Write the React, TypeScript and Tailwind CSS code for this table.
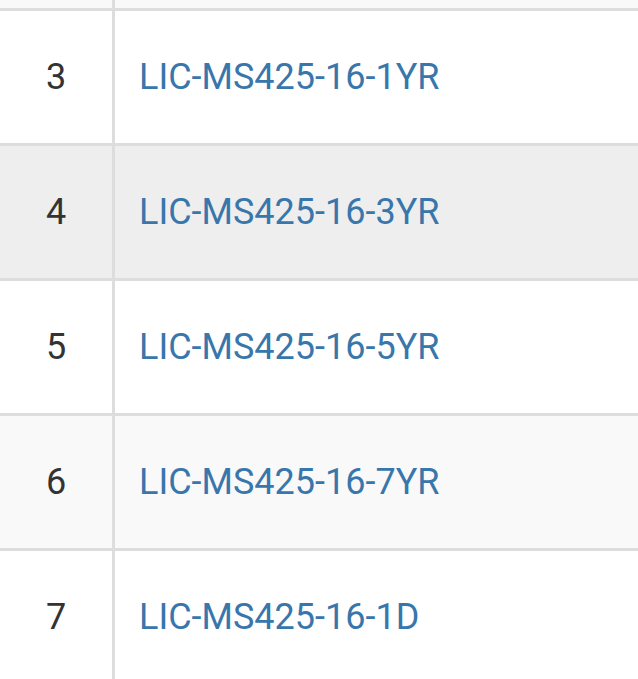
const rows = [
  { n: '3', sku: 'LIC-MS425-16-1YR', bg: 'bg-white' },
  { n: '4', sku: 'LIC-MS425-16-3YR', bg: 'bg-[#eeeeee]' },
  { n: '5', sku: 'LIC-MS425-16-5YR', bg: 'bg-white' },
  { n: '6', sku: 'LIC-MS425-16-7YR', bg: 'bg-[#f9f9f9]' },
  { n: '7', sku: 'LIC-MS425-16-1D', bg: 'bg-white' },
];

export default function App() {
  return (
    <div
      className="h-[679px] w-[638px] overflow-hidden bg-white"
      style={{ fontFamily: 'Roboto, "Liberation Sans", sans-serif' }}
    >
      {/* tail of the previous row */}
      <div className="flex h-[8px] bg-[#f9f9f9]">
        <div className="w-[115px] shrink-0 border-r-[3px] border-[#dddddd]" />
        <div className="flex-1" />
      </div>

      {rows.map((row) => (
        <div key={row.n} className={`flex h-[135px] border-t-[3px] border-[#dddddd] ${row.bg}`}>
          <div className="flex w-[115px] shrink-0 items-center justify-center border-r-[3px] border-[#dddddd] text-[36px] text-[#333333]">
            {row.n}
          </div>
          <div className="flex flex-1 items-center pl-[24px] text-[36px] text-[#3876ab]">
            <a href="#">{row.sku}</a>
          </div>
        </div>
      ))}
    </div>
  );
}
